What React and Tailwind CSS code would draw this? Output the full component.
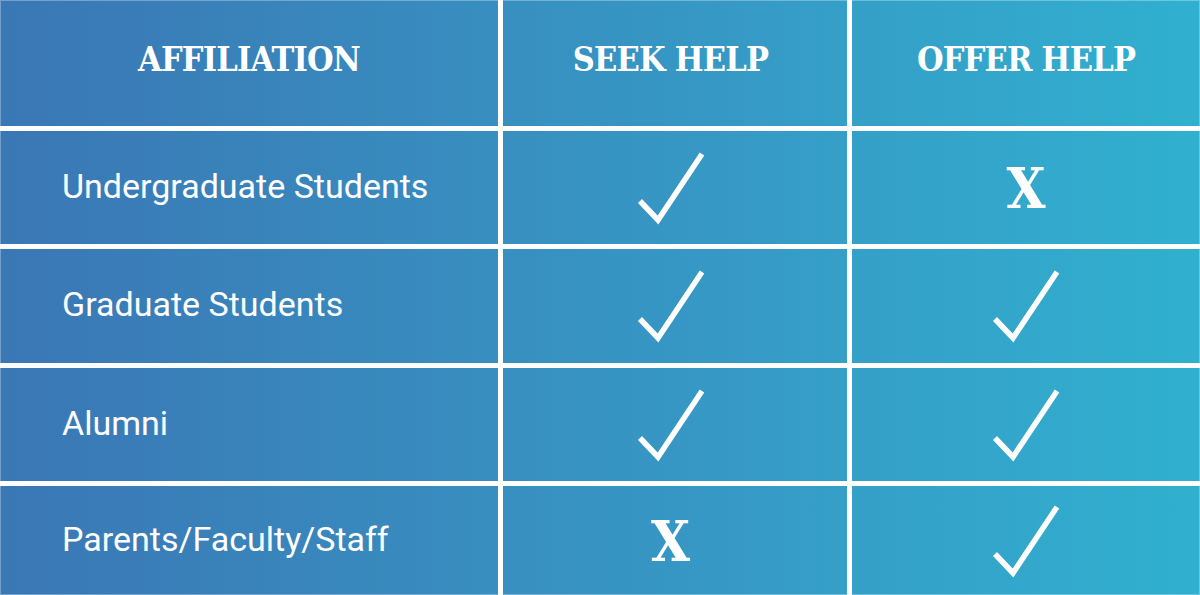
import React from 'react';

const rows = [
  { label: 'Undergraduate Students', seek: true, offer: false },
  { label: 'Graduate Students', seek: true, offer: true },
  { label: 'Alumni', seek: true, offer: true },
  { label: 'Parents/Faculty/Staff', seek: false, offer: true },
];

// row heights include the 5px white line underneath, except the last one
const rowHeights = ['h-[118px]', 'h-[119px]', 'h-[118px]', 'h-[109px]'];

const Check = () => (
  <svg width="70" height="76" viewBox="0 0 70 76" className="block">
    <polyline
      points="4,51 22,70 66,4"
      fill="none"
      stroke="white"
      strokeWidth="5.5"
      strokeLinejoin="miter"
    />
  </svg>
);

const Cross = () => (
  <span className="text-[56px] leading-none font-bold text-white [font-family:'DejaVu_Serif_Condensed','DejaVu_Serif',serif]">
    X
  </span>
);

const Mark = ({ yes }) => (yes ? <Check /> : <Cross />);

const App = () => {
  return (
    <div className="w-[1200px] h-[595px] bg-gradient-to-r from-[#3a77b5] to-[#30b0cf] shadow-[inset_0_0_0_1px_rgba(255,255,255,0.3)] overflow-hidden">
      <div className="grid grid-cols-[503px_349px_1fr] text-white">
        {/* header */}
        <div className="h-[131px] border-r-[5px] border-b-[5px] border-white flex items-center justify-center pb-[7px]">
          <span className="text-[34px] font-bold tracking-[-0.8px] [font-family:'DejaVu_Serif_Condensed','DejaVu_Serif',serif]">AFFILIATION</span>
        </div>
        <div className="h-[131px] border-r-[5px] border-b-[5px] border-white flex items-center justify-center pb-[7px] pr-[9px]">
          <span className="text-[34px] font-bold tracking-[-0.8px] [font-family:'DejaVu_Serif_Condensed','DejaVu_Serif',serif]">SEEK HELP</span>
        </div>
        <div className="h-[131px] border-b-[5px] border-white flex items-center justify-center pb-[7px]">
          <span className="text-[34px] font-bold tracking-[-0.8px] [font-family:'DejaVu_Serif_Condensed','DejaVu_Serif',serif]">OFFER HELP</span>
        </div>

        {rows.map((row, i) => {
          const last = i === rows.length - 1;
          const h = rowHeights[i];
          return (
            <React.Fragment key={row.label}>
              <div className={`${h} border-r-[5px] border-white ${last ? '' : 'border-b-[5px]'} flex items-center pl-[62px] pb-[3px]`}>
                <span className="text-[34px] font-normal [font-family:Roboto,'Liberation_Sans',sans-serif]">{row.label}</span>
              </div>
              <div className={`${h} border-r-[5px] border-white ${last ? '' : 'border-b-[5px]'} flex items-center justify-center pr-[9px]`}>
                <Mark yes={row.seek} />
              </div>
              <div className={`${h} border-white ${last ? '' : 'border-b-[5px]'} flex items-center justify-center`}>
                <Mark yes={row.offer} />
              </div>
            </React.Fragment>
          );
        })}
      </div>
    </div>
  );
};

export default App;
